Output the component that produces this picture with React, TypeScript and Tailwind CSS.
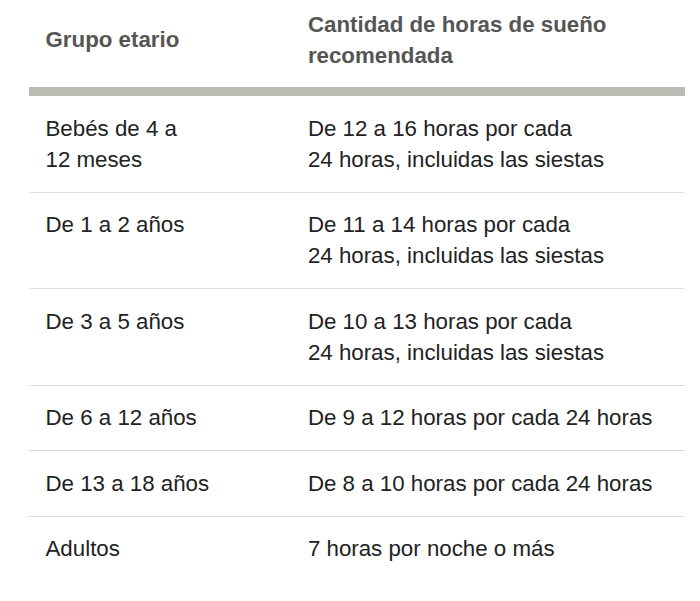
const ROWS: { group: React.ReactNode; hours: React.ReactNode }[] = [
  {
    group: (
      <>
        Bebés de 4 a<br />12 meses
      </>
    ),
    hours: (
      <>
        De 12 a 16 horas por cada
        <br />
        24 horas, incluidas las siestas
      </>
    ),
  },
  {
    group: "De 1 a 2 años",
    hours: (
      <>
        De 11 a 14 horas por cada
        <br />
        24 horas, incluidas las siestas
      </>
    ),
  },
  {
    group: "De 3 a 5 años",
    hours: (
      <>
        De 10 a 13 horas por cada
        <br />
        24 horas, incluidas las siestas
      </>
    ),
  },
  { group: "De 6 a 12 años", hours: "De 9 a 12 horas por cada 24 horas" },
  { group: "De 13 a 18 años", hours: "De 8 a 10 horas por cada 24 horas" },
  { group: "Adultos", hours: "7 horas por noche o más" },
];

export default function App() {
  return (
    <div className="min-h-[601px] bg-white font-['Liberation_Sans',Arial,sans-serif] text-[22.3px] leading-[31px]">
      <table className="ml-[29px] w-[656px] table-fixed border-collapse">
        <colgroup>
          <col className="w-[40%]" />
          <col className="w-[60%]" />
        </colgroup>
        <thead>
          <tr className="border-b-[9px] border-[#bbbcb4]">
            <th className="px-[16.5px] pt-[8.5px] pb-[16.5px] text-left align-middle font-bold text-[#555555]">
              Grupo etario
            </th>
            <th className="px-[16.5px] pt-[8.5px] pb-[16.5px] text-left align-middle font-bold text-[#555555]">
              Cantidad de horas de sueño
              <br />
              recomendada
            </th>
          </tr>
        </thead>
        <tbody>
          {ROWS.map((r, i) => (
            <tr key={i} className={i < ROWS.length - 1 ? "border-b border-[#dedede]" : ""}>
              <td className="px-[16.5px] py-[16.75px] align-top text-[#222222]">{r.group}</td>
              <td className="whitespace-nowrap px-[16.5px] py-[16.75px] align-top text-[#222222]">{r.hours}</td>
            </tr>
          ))}
        </tbody>
      </table>
    </div>
  );
}
